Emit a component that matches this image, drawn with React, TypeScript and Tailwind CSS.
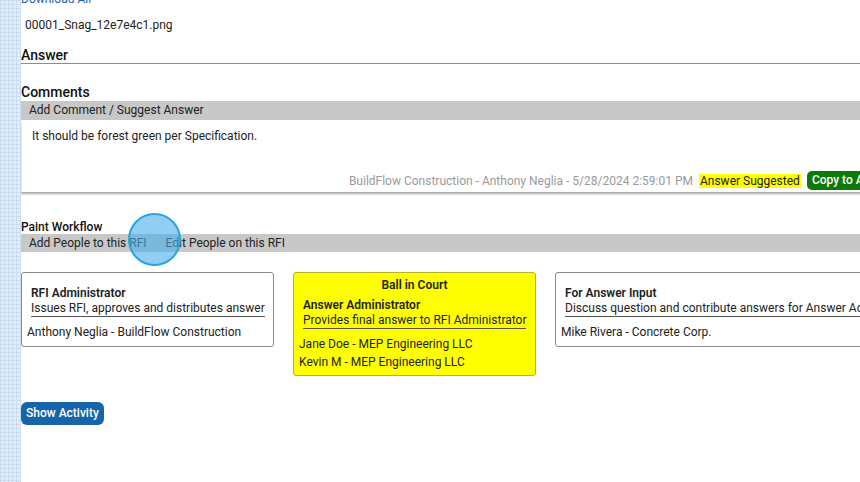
import React from "react";

const Card = ({
  title,
  desc,
  people,
  yellow,
  heading,
  width,
}: {
  title: string;
  desc: string;
  people: string[];
  yellow?: boolean;
  heading?: string;
  width: string;
}) => (
  <div
    className={`${width} shrink-0 rounded-[3px] border ${
      yellow ? "bg-[#ffff00] border-[#b5b52a] pt-[4px] pb-[5px]" : "bg-white border-[#8a8a8a] pt-[13px] pb-[6px]"
    } px-[5px]`}
  >
    {heading && (
      <div className="text-center text-[12px] leading-[16px] font-semibold text-[#222] mb-[5px]">{heading}</div>
    )}
    <div className="px-[4px]">
      <div className="text-[12px] leading-[15px] font-semibold text-[#222]">{title}</div>
      <div className="w-fit whitespace-nowrap text-[12px] leading-[15px] text-[#222] border-b border-[#555]">
        {desc}
      </div>
    </div>
    <div className="mt-[7px] flex flex-col gap-[2px]">
      {people.map((p) => (
        <div key={p} className="text-[12px] leading-[16px] text-[#222] whitespace-nowrap">
          {p}
        </div>
      ))}
    </div>
  </div>
);

export default function App() {
  return (
    <div className="flex h-[482px] w-[860px] overflow-hidden bg-white font-['Roboto',sans-serif]">
      <div className="w-[21px] shrink-0 bg-[#e4eefb] bg-[linear-gradient(90deg,#cbdcf2_1px,transparent_1px),linear-gradient(#cbdcf2_1px,transparent_1px)] bg-[size:4px_4px]" />
      <div className="flex-1 overflow-hidden">
        <div className="w-[882px]">
          <div className="-mt-[9px] text-[12px] leading-[16px] text-[#1a5fb4]">Download All</div>
          <div className="mt-[10px] pl-[4px] text-[12px] leading-[16px] text-[#222]">00001_Snag_12e7e4c1.png</div>

          <div className="mt-[14px] border-b border-[#8c8c8c] text-[14px] leading-[16px] font-medium text-[#111]">
            Answer
          </div>

          <div className="mt-[19px] text-[14px] leading-[18px] font-medium text-[#111]">Comments</div>
          <div className="h-[19px] bg-[#c8c8c8] pl-[8px] text-[12px] leading-[19px] text-[#222]">
            Add Comment / Suggest Answer
          </div>
          <div className="mt-[3px] border-l border-[#e4e4e4] bg-white shadow-[0_2px_2px_rgba(0,0,0,0.35)] pb-[2px]">
            <div className="pt-[5px] pl-[10px] text-[12px] leading-[16px] text-[#222]">
              It should be forest green per Specification.
            </div>
            <div className="mt-[27px] flex items-center justify-end gap-[6px] pr-[2px]">
              <span className="text-[12px] leading-[16px] text-[#9a9a9a]">
                BuildFlow Construction - Anthony Neglia - 5/28/2024 2:59:01 PM
              </span>
              <span className="bg-[#ffff00] px-[1px] text-[12px] leading-[14px] text-[#222]">Answer Suggested</span>
              <span className="rounded-[5px] bg-[#0b7a0b] px-[5px] text-[12px] leading-[19px] font-medium text-white">
                Copy to Answer
              </span>
            </div>
          </div>

          <div className="mt-[29px] text-[12px] leading-[13px] font-medium text-[#111]">Paint Workflow</div>
          <div className="relative flex h-[18px] items-center gap-[19px] bg-[#c8c8c8] pl-[8px] text-[12px] leading-[18px] text-[#222]">
            <span>Add People to this RFI</span>
            <span>Edit People on this RFI</span>
            <div className="absolute left-[107px] top-[-21px] h-[53px] w-[53px] rounded-full border-2 border-[#2aa3e0] bg-[rgba(70,175,235,0.6)]" />
          </div>

          <div className="mt-[20px] flex items-start gap-[19px]">
            <Card
              width="w-[253px]"
              title="RFI Administrator"
              desc="Issues RFI, approves and distributes answer"
              people={["Anthony Neglia - BuildFlow Construction"]}
            />
            <Card
              width="w-[243px]"
              yellow
              heading="Ball in Court"
              title="Answer Administrator"
              desc="Provides final answer to RFI Administrator"
              people={["Jane Doe - MEP Engineering LLC", "Kevin M - MEP Engineering LLC"]}
            />
            <Card
              width="w-[330px]"
              title="For Answer Input"
              desc="Discuss question and contribute answers for Answer Administrator"
              people={["Mike Rivera - Concrete Corp."]}
            />
          </div>

          <button className="mt-[26px] rounded-[6px] bg-[#1565a8] px-[5px] text-[12px] leading-[23px] font-medium text-white">
            Show Activity
          </button>
        </div>
      </div>
    </div>
  );
}
